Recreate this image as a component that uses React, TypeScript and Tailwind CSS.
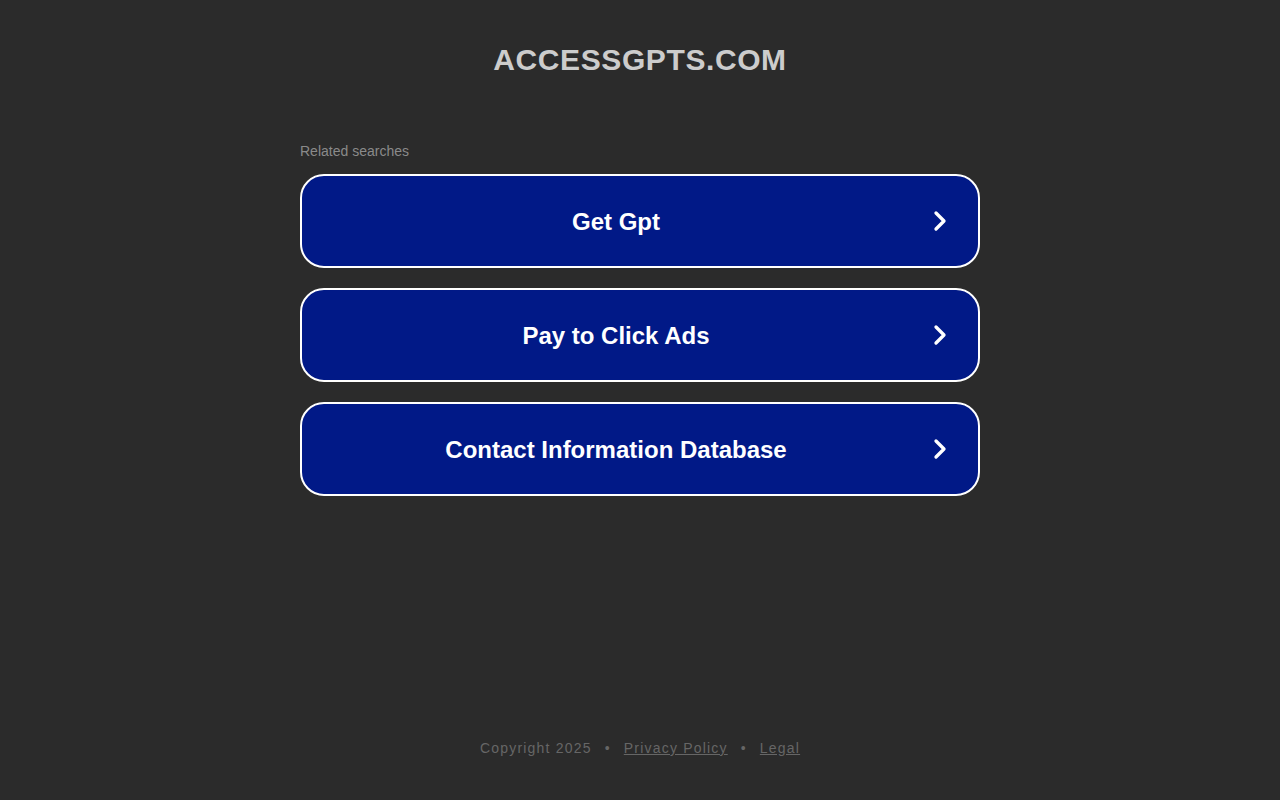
import { ChevronRight } from 'lucide-react';

const searches = ['Get Gpt', 'Pay to Click Ads', 'Contact Information Database'];

const App = () => {
  return (
    <div className="flex flex-col h-screen bg-[#2b2b2b] font-['Liberation_Sans',Arial,sans-serif]">
      {/* Header */}
      <header className="pt-[42px] text-center">
        <h1 className="text-[30px] leading-[36px] font-bold tracking-[0.6px] text-[#cccccc]">ACCESSGPTS.COM</h1>
      </header>

      {/* Related searches */}
      <main className="w-[680px] mx-auto mt-[65px]">
        <p className="text-[14px] leading-[16px] text-[#8a8a8a] mb-[15px]">Related searches</p>
        <ul className="flex flex-col gap-[20px]">
          {searches.map((s) => (
            <li key={s}>
              <a
                href="#"
                className="flex items-center h-[94px] rounded-[24px] border-2 border-white bg-[#011987] text-white"
              >
                <span className="flex-1 text-center text-[24px] font-bold pl-[6px] pt-[2px]">{s}</span>
                <ChevronRight className="w-[32px] h-[32px] mr-[22px]" strokeWidth={2.5} />
              </a>
            </li>
          ))}
        </ul>
      </main>

      {/* Footer */}
      <footer className="mt-auto pb-[44px] text-center text-[14px] leading-[16px] tracking-[1.2px] text-[#666666]">
        <span>Copyright 2025</span>
        <span className="mx-[13px]">•</span>
        <a href="#" className="underline">Privacy Policy</a>
        <span className="mx-[13px]">•</span>
        <a href="#" className="underline">Legal</a>
      </footer>
    </div>
  );
};

export default App;
